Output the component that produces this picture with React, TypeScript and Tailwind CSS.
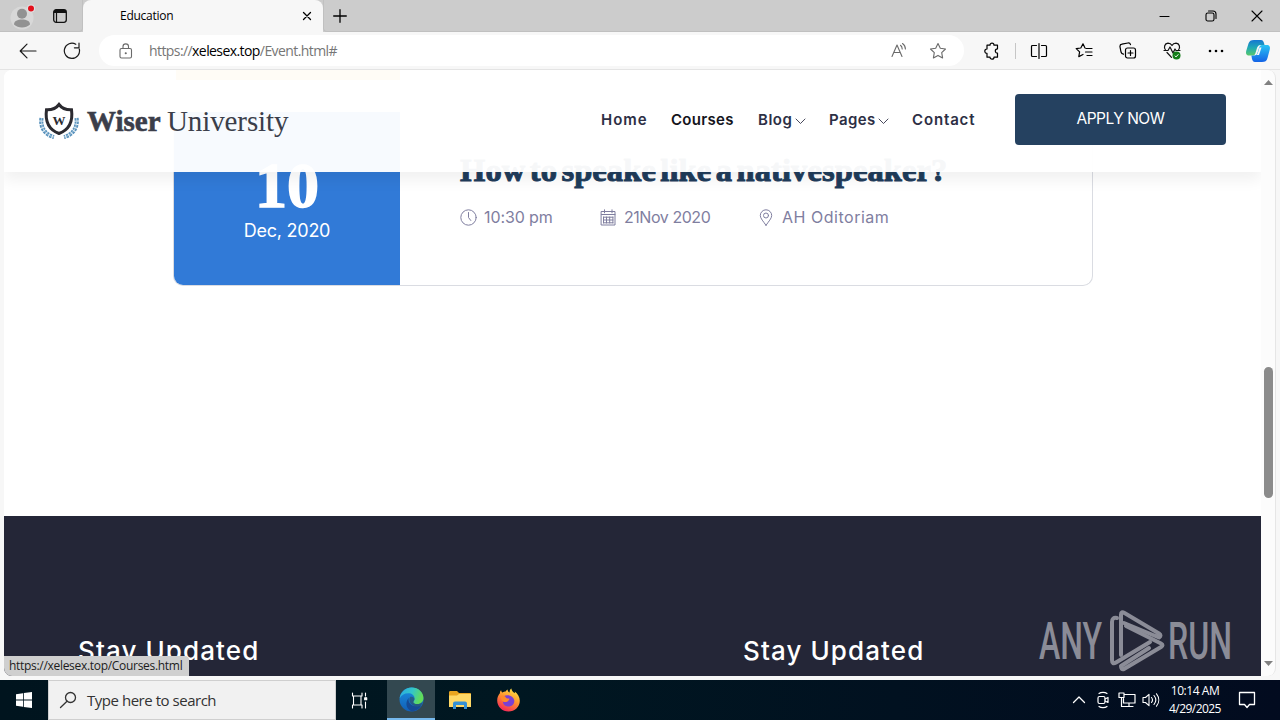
import type { ReactNode } from 'react';

const line = { fill: 'none', stroke: 'currentColor', strokeLinecap: 'round' as const, strokeLinejoin: 'round' as const };

function Icon({ children, size = 20, w = 1.2, className = '' }: { children: ReactNode; size?: number; w?: number; className?: string }) {
  return (
    <svg width={size} height={size} viewBox={`0 0 ${size} ${size}`} {...line} strokeWidth={w} className={`block shrink-0 ${className}`}>
      {children}
    </svg>
  );
}

function TabBar() {
  return (
    <div className="flex h-8 shrink-0 bg-[#cccccc]">
      <div className="flex w-[83px] items-center rounded-br-[4px] border-r border-b border-[#c0c0c0] pl-[10px]">
        <svg width="26" height="28" viewBox="0 0 26 28" className="block shrink-0">
          <circle cx="12" cy="16" r="11.5" fill="#d8d8d8" />
          <circle cx="12" cy="11.700" r="5" fill="#929292" />
          <path d="M4 22.500c0-3.600 3.500-5 8-5s8 1.400 8 5c-2 2-5 3-8 3s-6-1-8-3z" fill="#929292" />
          <circle cx="21" cy="6.500" r="4" fill="#e1e1e1" />
          <circle cx="21" cy="6.500" r="3" fill="#e3101c" />
        </svg>
        <svg width="16" height="16" viewBox="0 0 16 16" className="ml-[16px] block shrink-0">
          <rect x="1.700" y="1.700" width="12.600" height="12.600" rx="2.500" fill="none" stroke="#111" strokeWidth="1.300" />
          <path d="M1.700 5V4a2.300 2.300 0 0 1 2.300-2.300h8A2.300 2.300 0 0 1 14.300 4v1z" fill="#111" />
          <path d="M4.500 5v9" stroke="#111" strokeWidth="1.200" />
        </svg>
      </div>
      <div className="flex w-[240px] items-center rounded-t-[8px] bg-[#f7f7f7] pl-[37px]">
        <span className="w-[182px] text-[12px] leading-4 tracking-[-0.25px] text-black">Education</span>
        <Icon size={10} w={1.3} className="text-black"><path d="M1.500 1.500l7 7M8.500 1.500l-7 7" /></Icon>
      </div>
      <div className="flex flex-1 items-center rounded-bl-[4px] border-b border-l border-[#c0c0c0] pl-[9px]">
        <Icon size={14} w={1.3} className="text-black"><path d="M7 .700v12.600M.700 7h12.600" /></Icon>
        <div className="ml-auto flex items-center pr-[17px] text-black">
          <Icon size={12} w={1.1}><path d="M1 6.500h9" /></Icon>
          <Icon size={12} w={1.1} className="ml-[34px]"><rect x="1" y="3" width="8" height="8" rx="1.800" /><path d="M3.500 1h4.500a3 3 0 0 1 3 3v4.500" /></Icon>
          <Icon size={12} w={1.1} className="ml-[34px]"><path d="M1 1l10 10M11 1L1 11" /></Icon>
        </div>
      </div>
    </div>
  );
}

function Toolbar() {
  return (
    <div className="flex h-[37px] shrink-0 items-center bg-[#f7f7f7] pl-[19px] text-[#1a1a1a]">
      <Icon size={18} w={1.2}><path d="M17 9H1.500M8 2.200L1.200 9 8 15.800" /></Icon>
      <Icon size={18} w={1.2} className="ml-[26px]"><path d="M16.300 7A7.600 7.600 0 1 1 12.800 2.300M16 1.200v4.600h-4.600" /></Icon>
      <div className="ml-[18px] flex h-[31px] w-[865px] items-center rounded-full bg-white pl-[19px] text-[#6a6a6a]">
        <Icon size={16} w={1.1}><rect x="2" y="5.500" width="11.500" height="9.500" rx="1.500" /><path d="M5 5.500V3.600a2.750 2.750 0 0 1 5.500 0v1.900" /><circle cx="7.750" cy="10.200" r=".5" fill="currentColor" /></Icon>
        <span className="ml-[15px] w-[741px] text-[14px] leading-5 tracking-[-0.58px] whitespace-nowrap text-[#767676]">
          https://<span className="text-black">xelesex.top</span>/Event.html#
        </span>
        <Icon size={18} w={1.1}><path d="M2 14.500L7 3l5 11.500M3.700 10.500h6.600M10.500 3.300c1 .8 1.700 2 1.700 3.700M12.500 1.500c1.800 1.200 2.900 3.200 2.900 5.500" /></Icon>
        <Icon size={18} w={1.1} className="ml-[21px]"><path d="M9 1.500l2.300 4.800 5.200.700-3.800 3.700.9 5.200L9 13.400l-4.600 2.500.9-5.200L1.500 7l5.200-.7z" /></Icon>
      </div>
      <Icon size={18} w={1.2} className="ml-[19px] text-black"><path d="M4 3.200h3a2 2 0 0 1 4 0h3.500v3.600a2.200 2.200 0 0 0 0 4.400v4H11a2 2 0 0 1-4 0H4v-3.800a2.200 2.200 0 0 1 0-4.400z" /></Icon>
      <div className="ml-[14px] h-4 w-px bg-[#c6c6c6]" />
      <Icon size={18} w={1.2} className="ml-[14px] text-black"><path d="M6.500 3.500h-4a1 1 0 0 0-1 1v9a1 1 0 0 0 1 1h4M11.500 3.500h4a1 1 0 0 1 1 1v9a1 1 0 0 1-1 1h-4M9 1.500v15" /></Icon>
      <Icon size={18} w={1.2} className="ml-[27px] text-black"><path d="M10 6L8 1.800 5.800 6l-4.600.6 3.400 3.300-.8 4.700L8 12.500M11 6.500h6M10.500 10H17M12 13.500h5" /></Icon>
      <Icon size={18} w={1.2} className="ml-[26px] text-black"><rect x="6.500" y="6" width="10" height="10" rx="2" /><path d="M11.500 8.500v5M9 11h5M4.500 12.200A3 3 0 0 1 2 10L1 4.800a2.300 2.300 0 0 1 1.900-2.600l6-1.200a2.300 2.300 0 0 1 2.600 1.700" /></Icon>
      <svg width="20" height="20" viewBox="0 0 20 20" className="ml-[26px] block shrink-0">
        <path d="M2.500 9C.5 6.500 1.500 2.500 5 2.200c2 0 3.300 1 4 2.300.7-1.300 2-2.300 4-2.300 3.600.3 4.500 4.300 2.500 6.800M4 11.500l4.500 4.800M1 9.500h4l2-3.500 3 6 2-4 1 1.500h4" {...line} stroke="#111" strokeWidth="1.200" />
        <circle cx="13.500" cy="14.500" r="4" fill="#137d18" />
        <path d="M11.800 14.700l1.200 1.200 2.400-2.600" fill="none" stroke="#fff" strokeWidth="1" />
      </svg>
      <svg width="16" height="4" viewBox="0 0 16 4" className="ml-[25px] block shrink-0"><circle cx="2" cy="2" r="1.300" /><circle cx="8" cy="2" r="1.300" /><circle cx="14" cy="2" r="1.300" /></svg>
      <svg width="26" height="24" viewBox="0 0 26 24" className="ml-[21px] block shrink-0">
        <defs>
          <linearGradient id="cpA" x1="0" y1="0" x2="0" y2="1"><stop offset="0" stopColor="#1677d2" /><stop offset=".5" stopColor="#20aab5" /><stop offset="1" stopColor="#58c86b" /></linearGradient>
          <linearGradient id="cpB" x1="0" y1="0" x2="0" y2="1"><stop offset="0" stopColor="#28c4f4" /><stop offset="1" stopColor="#1463e6" /></linearGradient>
        </defs>
        <path d="M9 1h7c2 0 2.500 1.500 3 3l.5 2h-4c-2 0-3 1.500-3.500 3l-1.500 5c-.6 2-1.500 2.500-3 2.500H4c-3 0-3.500-2.500-2.500-5.500l2-6.500C4.300 2 6 1 9 1z" fill="url(#cpA)" />
        <path d="M17 23h-7c-2 0-2.500-1.500-3-3l-.6-3.500H9c2 0 3-1 3.500-2.800L14 9c.6-2 1.500-3 3-3h5c3 0 3.500 2.500 2.500 5.500l-2 7.500c-.8 3-2.500 4-5.500 4z" fill="url(#cpB)" />
        <path d="M14.500 8.500h2l-2.500 7.500h-3c1 0 1.500-1 2-2.500z" fill="#f7f7f7" />
      </svg>
    </div>
  );
}

function Crest() {
  return (
    <svg width="42" height="40" viewBox="0 0 42 40" className="block shrink-0">
      <g fill="none" stroke="#5a93bd" strokeWidth="4.200" strokeDasharray="2.500 .9">
        <path d="M3.500 17C2 26 7 34 16 36" />
        <path d="M38.500 17C40 26 35 34 26 36" />
      </g>
      <g fill="none" stroke="#cfe2ee" strokeWidth=".7"><path d="M3.500 17C2 26 7 34 16 36" /><path d="M38.500 17C40 26 35 34 26 36" /></g>
      <path d="M21 3.500c3 4 7.500 5.500 12.500 5.300C35 20 32 28.500 21 32.500 10 28.500 7 20 8.500 8.800 13.500 9 18 7.500 21 3.500z" fill="#fff" stroke="#2b2a30" strokeWidth="3" />
      <text x="21" y="23.500" textAnchor="middle" fontSize="13" fontWeight="700" fill="#2b2a30" fontFamily="Liberation Serif, serif">W</text>
    </svg>
  );
}

function Chevron() {
  return <Icon size={11} w={0.9} className="mt-[3px] text-[#33344a]"><path d="M1 3l4.500 4.500L10 3" /></Icon>;
}

function SiteHeader() {
  return (
    <header className="absolute inset-x-0 top-0 flex h-[102px] items-center bg-white/96 pl-[34px] shadow-[0_8px_14px_rgba(0,0,0,0.06)]">
      <div className="flex w-[563px] items-center font-['Liberation_Serif',serif] text-[29px] leading-10 text-[#3b3e4a]">
        <Crest />
        <span className="ml-[7px] w-[80px] font-bold [-webkit-text-stroke:0.6px_#3b3e4a]">Wiser</span>
        <span className="tracking-[-0.1px]">University</span>
      </div>
      <nav className="-mt-[2px] flex w-[414px] items-center font-[Inter,sans-serif] text-[15px] leading-6 font-semibold text-[#2d2f45]">
        <span className="w-[70px] tracking-[1px]">Home</span>
        <span className="w-[87px] tracking-[0.3px] text-[#14141c]">Courses</span>
        <span className="w-[37px] tracking-[0.5px]">Blog</span>
        <span className="w-[34px]"><Chevron /></span>
        <span className="w-[49px] tracking-[0.4px]">Pages</span>
        <span className="w-[34px]"><Chevron /></span>
        <span className="tracking-[0.85px]">Contact</span>
      </nav>
      <a className="-mt-[4px] flex h-[51px] w-[211px] items-center justify-center rounded-[4px] bg-[#254160] font-[Inter,sans-serif] text-[15.5px] tracking-[-0.5px] text-white">APPLY NOW</a>
    </header>
  );
}

function EventCard() {
  return (
    <article className="mt-[32px] ml-[169px] flex h-[174px] w-[920px] rounded-b-[10px] border border-t-0 border-[#dadce2]">
      <div className="flex w-[226px] flex-col items-center rounded-bl-[9px] bg-[#317ad7] pt-[48px] text-white">
        <span className="font-['Liberation_Serif',serif] text-[64px] leading-[52px] font-bold [-webkit-text-stroke:1.5px_white]">10</span>
        <span className="mt-[5px] font-[Inter,sans-serif] text-[18px] leading-7 tracking-[-0.25px]">Dec, 2020</span>
      </div>
      <div className="flex flex-col pt-[38px] pl-[60px]">
        <h3 className="font-['Liberation_Serif',serif] text-[32.5px] leading-[40px] font-bold tracking-[0.1px] whitespace-nowrap text-[#1f3c5b] [-webkit-text-stroke:1px_#1f3c5b] [word-spacing:-3.800px]">How to speake like a nativespeaker?</h3>
        <div className="mt-[15px] flex items-center font-[Inter,sans-serif] text-[16px] leading-6 text-[#7f7e9f]">
          <Icon size={17} w={1}><circle cx="8.500" cy="8.500" r="7.700" /><path d="M8.500 3.500v5l2.300 3" /></Icon>
          <span className="ml-[7px] w-[116px] tracking-[-0.1px]">10:30 pm</span>
          <Icon size={17} w={1}><path d="M1.500 2.500H15v13.500H1.500zM1.500 5.500H15M4.500 .8v3M12 .8v3M3.500 8.200H13M3.500 11H13M3.500 13.800H13M3.500 8v6M6.500 8v6M9.700 8v6M12.900 8v6" /></Icon>
          <span className="ml-[7px] w-[133px] tracking-[-0.45px]">21Nov 2020</span>
          <Icon size={17} w={1}><path d="M9 16.300C6.500 12.500 3.300 9.500 3.300 6.500a5.700 5.700 0 0 1 11.400 0c0 3-3.200 6-5.700 9.800z" /><circle cx="9" cy="6.500" r="2.500" /></Icon>
          <span className="ml-[8px] tracking-[0.52px]">AH Oditoriam</span>
        </div>
      </div>
    </article>
  );
}

function Watermark() {
  return (
    <svg width="200" height="64" viewBox="0 0 200 64" className="block">
      <g fill="#8b8c97" fontFamily="Roboto, sans-serif" fontSize="52" fontWeight="500">
        <text x="1" y="50" textLength="63" lengthAdjust="spacingAndGlyphs">ANY</text>
        <text x="130" y="50" textLength="64" lengthAdjust="spacingAndGlyphs">RUN</text>
      </g>
      <g fill="none" stroke="#8b8c97" strokeWidth="4" strokeLinejoin="round" strokeLinecap="round">
        <path d="M83 46V5.500Q83 2 86.500 4L121 24.500Q124 26.500 121 28.500L86 14" />
        <path d="M79 9Q74 8 74 13v38Q74 56 78 53.500l34-20.500" />
        <path d="M88 17l35 17.500q3 1.500 0 3.500L86 60q-3 1-3-3l28-18" />
      </g>
    </svg>
  );
}

function Page() {
  return (
    <div className="relative flex w-[1257px] flex-col overflow-hidden rounded-tl-[8px] rounded-bl-[8px] bg-white">
      <div className="ml-[172px] h-[10px] w-[224px] shrink-0 bg-[#ffb52e]" />
      <EventCard />
      <footer className="mt-[230px] flex h-[160px] shrink-0 items-start bg-[#242637] pl-[74px] font-[Inter,sans-serif] text-[26px] font-medium tracking-[1.1px] text-white">
        <h4 className="mt-[117px] w-[665px] leading-9">Stay Updated</h4>
        <h4 className="mt-[117px] leading-9">Stay Updated</h4>
      </footer>
      <SiteHeader />
      <div className="absolute bottom-[3px] left-[1034px]"><Watermark /></div>
      <div className="absolute bottom-0 left-0 flex h-5 w-[185px] items-center rounded-tr-[4px] bg-[#cfcfcf] pl-[5px] text-[12px] tracking-[-0.3px] whitespace-nowrap text-[#1c1c1c]">https://xelesex.top/Courses.html</div>
    </div>
  );
}

function Scrollbar() {
  return (
    <div className="flex w-[15px] flex-col items-center rounded-r-[8px] border-r border-[#e6e6e6] bg-[#fcfcfc] pt-[10px] pb-[10px] pl-px">
      <svg width="9" height="5" viewBox="0 0 9 5"><path d="M0 5l4.500-5L9 5z" fill="#808080" /></svg>
      <div className="mt-[282px] h-[131px] w-[9px] rounded-full bg-[#8b8b8b]" />
      <svg width="9" height="5" viewBox="0 0 9 5" className="mt-auto"><path d="M0 0h9L4.500 5z" fill="#808080" /></svg>
    </div>
  );
}

function Taskbar() {
  return (
    <div className="flex h-10 shrink-0 bg-[linear-gradient(90deg,#00141e_0%,#001721_40%,#020b1f_100%)] text-white">
      <div className="flex w-12 items-center justify-center">
        <svg width="16" height="16" viewBox="0 0 16 16"><path d="M0 2.200l7-1v6.400H0zM7.800 1.100L16 0v7.600H7.800zM0 8.400h7v6.400l-7-1zM7.800 8.400H16V16l-8.200-1.100z" fill="#fff" /></svg>
      </div>
      <div className="flex w-[288px] items-center border border-[#cfcfcf] bg-[#f1f1f1] pl-[10px] text-[#333]">
        <Icon size={18} w={1.3}><circle cx="11.500" cy="6.500" r="5" /><path d="M8 10.200L1.500 16.500" /></Icon>
        <span className="ml-[10px] text-[15px] leading-5 tracking-[-0.47px]">Type here to search</span>
      </div>
      <div className="flex w-[51px] items-center justify-center pr-[4px]">
        <Icon size={17} w={1.1}><path d="M1.500 1v3M11 1v3M1.500 13v3M11 13v3M1.500 4h9.500M1.500 13h9.500M2.500 4v9M10 4v9M14.500 1v3M14.500 10v6" /><rect x="13.700" y="5.700" width="2" height="2" fill="currentColor" /></Icon>
      </div>
      <div className="flex w-12 items-center justify-center border-b-2 border-[#76b9ed] bg-[#334850]">
        <svg width="25" height="25" viewBox="0 0 24 24">
          <defs>
            <linearGradient id="edA" x1="0" y1="0" x2="1" y2=".3"><stop offset="0" stopColor="#28a8e6" /><stop offset=".55" stopColor="#34c6c8" /><stop offset="1" stopColor="#62dc58" /></linearGradient>
            <linearGradient id="edB" x1="0" y1="0" x2="0" y2="1"><stop offset="0" stopColor="#1a8fe0" /><stop offset="1" stopColor="#125eb5" /></linearGradient>
          </defs>
          <circle cx="12" cy="12" r="11.500" fill="url(#edB)" />
          <path d="M.6 11C1.500 4.800 6.400.5 12.200.5c6.600 0 11.300 4.700 11.300 10 0 3.600-2.600 5.800-5.800 5.800-3 0-4.500-1.200-3.800-2.500.9-1 1-2 1-2.800 0-3-2.600-5-6-5C5 6 2 8 .6 11z" fill="url(#edA)" />
          <path d="M9.500 10.300c-1.700 4.400 2.500 9.800 11.500 8-1.500 2.600-4.500 4.500-7.800 5.100-5.700-1-8.300-8.100-3.700-13.100z" fill="#164a94" />
          <path d="M10.500 9.600c2.500-.8 4.200.3 4.400 1.800 0 1-.9 1.600-1 2.400-.5 1.300 1 2.500 3.800 2.500 2.200 0 4-1 5-2.500-.4 2-1.100 3.500-2 4.700-7 1.700-12.300-3.500-10.200-8.900z" fill="#334850" opacity=".55" />
        </svg>
      </div>
      <div className="flex w-[50px] items-center justify-center">
        <svg width="22" height="18" viewBox="0 0 22 18">
          <path d="M0 1.500C0 .7.500 0 1.300 0H8l2 2h11c.6 0 1 .4 1 1v4H0z" fill="#e9a520" /><path d="M0 4.500h8l2-1.500h12v13H0z" fill="#ffd866" />
          <path d="M4 18v-5.500a2 2 0 0 1 2-2h10a2 2 0 0 1 2 2V18h-3v-4H7v4z" fill="#3390d5" />
        </svg>
      </div>
      <div className="flex w-[46px] items-center justify-center">
        <svg width="23" height="24" viewBox="0 0 24 24">
          <defs><linearGradient id="ff" x1=".8" y1="0" x2=".3" y2="1"><stop offset="0" stopColor="#ffe847" /><stop offset=".45" stopColor="#ff982e" /><stop offset="1" stopColor="#f42359" /></linearGradient></defs>
          <path d="M3 5c0-1.500.5-2.500 1.300-3.300.2 1.300.7 2 1.400 2.600C7 3.200 8 3 9 3c.5-1 1.300-1.700 2-2 0 1.700 1 2.700 2.500 3.300C12.700 2.500 13.700 1 15 0c.2 2.200 1.700 3.500 3.500 5 .2-.7.200-1.400 0-2C21.500 5 23.800 8.700 23.800 12.700 23.800 19 18.500 24 12 24S.200 18.800.200 12.500C.2 9.500 1.300 7 3 5z" fill="url(#ff)" />
          <path d="M7 8c4-2.500 10-.5 11 4.200.5 4-2.500 6.600-6 6.600-3.800 0-6-2.700-5.800-5.300 2 1.200 5 .5 6-1-2.200 0-3-.9-3-2C7.800 10.500 7 9.500 7 8z" fill="#7a40d4" />
          <path d="M4 8c2-1.500 5 0 5.500 2 1 .7 2.200.4 3.500.7-.5 2.500-3 2.300-4 3.500-2.300 0-5-2-5-6.200z" fill="#ff8a2a" />
        </svg>
      </div>
      <div className="ml-auto flex items-center">
        <Icon size={14} w={1.3}><path d="M1.500 9.500L7 4l5.500 5.500" /></Icon>
        <Icon size={18} w={1.2} className="ml-[8px]"><rect x="4" y="5.500" width="7" height="7" rx="1.500" /><path d="M11 8l3-1.500v5L11 10M5 2.500C7 1 11 1 13 2.500M5 15.500c2 1.500 6 1.500 8 0" /></Icon>
        <svg width="18" height="16" viewBox="0 0 18 16" className="ml-[6px]" {...line} strokeWidth="1.200"><path d="M6 2.500h11v8.500H5.500V6.500M11 11v3.500M7 14.500h8M1 1h5v4.500H1zM3.500 5.500v9h3" /></svg>
        <svg width="18" height="16" viewBox="0 0 18 16" className="ml-[6px]" {...line} strokeWidth="1.100"><path d="M1 5.500h2.500L7 2.300v11.400l-3.500-3.200H1zM9.500 5.500c1.200 1.500 1.200 3.500 0 5M12 3.500c2.200 2.700 2.200 6.300 0 9M14.500 1.800c3 3.700 3 8.700 0 12.400" /></svg>
        <div className="ml-[5px] flex w-[60px] flex-col items-center text-[12px] leading-[18px] tracking-[-0.45px] whitespace-nowrap"><span>10:14 AM</span><span className="tracking-[-0.550px]">4/29/2025</span></div>
        <Icon size={18} w={1.3} className="mr-[24px] ml-[13px]"><path d="M1.500 1.500h15v12h-5L9 16.500l-2.500-3h-5z" /></Icon>
      </div>
    </div>
  );
}

export default function App() {
  return (
    <div className="flex h-[720px] w-[1280px] flex-col overflow-hidden bg-[#f7f7f7] font-['Open_Sans',sans-serif]">
      <TabBar />
      <Toolbar />
      <div className="flex h-[611px] shrink-0 border-t border-[#e4e4e4] pb-1 pl-1">
        <Page />
        <Scrollbar />
      </div>
      <Taskbar />
    </div>
  );
}
